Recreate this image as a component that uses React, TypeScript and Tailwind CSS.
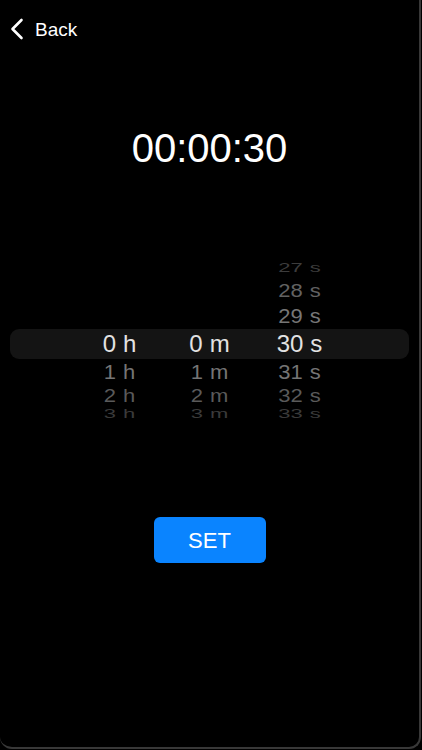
const FONT = "font-['Liberation_Sans',Arial,sans-serif]";

type Row = {
  h?: string;
  m?: string;
  s: string;
  height: string;
  color: string;
  scale: string;
  selected?: boolean;
};

const ROWS: Row[] = [
  { s: "27", height: "h-[16px]", color: "text-[#3c3c3c]", scale: "scale-y-[0.6] translate-y-[-3px]" },
  { s: "28", height: "h-[24px]", color: "text-[#626262]", scale: "scale-y-[0.85]" },
  { s: "29", height: "h-[26px]", color: "text-[#767676]", scale: "scale-y-[0.95]" },
  { h: "0", m: "0", s: "30", height: "h-[30px]", color: "text-[#e2e2e2]", scale: "", selected: true },
  { h: "1", m: "1", s: "31", height: "h-[26px]", color: "text-[#747474]", scale: "scale-y-[0.95]" },
  { h: "2", m: "2", s: "32", height: "h-[22px]", color: "text-[#5a5a5a]", scale: "scale-y-[0.82]" },
  { h: "3", m: "3", s: "33", height: "h-[14px]", color: "text-[#3a3a3a]", scale: "scale-y-[0.6]" },
];

function Cell({ value, unit, row }: { value?: string; unit: string; row: Row }) {
  return (
    <div className={`flex w-[90px] items-center justify-center ${row.color}`}>
      {value !== undefined && (
        <span className={`inline-block leading-none ${row.scale} ${row.selected ? "text-[24px]" : "text-[22px]"}`}>
          {value}
          <span className="ml-[7px]">{unit}</span>
        </span>
      )}
    </div>
  );
}

export default function App() {
  return (
    <div className={`h-[750px] w-[422px] bg-black ${FONT}`}>
      <div className="flex h-[749px] w-[421px] flex-col rounded-b-[12px] border-r-2 border-b-2 border-[#383838] bg-black">
        <div className="flex items-center gap-[11px] pl-[10px] pt-[18px] text-white">
          <svg width="14" height="22" viewBox="0 0 14 22" fill="none">
            <polyline points="11.5,2 2.5,11 11.5,20" stroke="white" strokeWidth="2.6" strokeLinecap="round" strokeLinejoin="round" />
          </svg>
          <span className="text-[19px] leading-none">Back</span>
        </div>

        <div className="mt-[88px] text-center text-[40px] leading-none text-white">00:00:30</div>

        <div className="mt-[95px] flex flex-col overflow-hidden">
          {ROWS.map((row) => (
            <div
              key={row.s}
              className={`mx-[10px] flex justify-center overflow-hidden ${row.height} ${row.selected ? "rounded-[9px] bg-[#141414]" : ""}`}
            >
              <Cell value={row.h} unit="h" row={row} />
              <Cell value={row.m} unit="m" row={row} />
              <Cell value={row.s} unit="s" row={row} />
            </div>
          ))}
        </div>

        <div className="mt-[96px] flex justify-center">
          <button
            type="button"
            className="flex h-[46px] w-[112px] items-center justify-center rounded-[6px] bg-[#0a84ff] text-[22px] text-white"
          >
            SET
          </button>
        </div>
      </div>
    </div>
  );
}
